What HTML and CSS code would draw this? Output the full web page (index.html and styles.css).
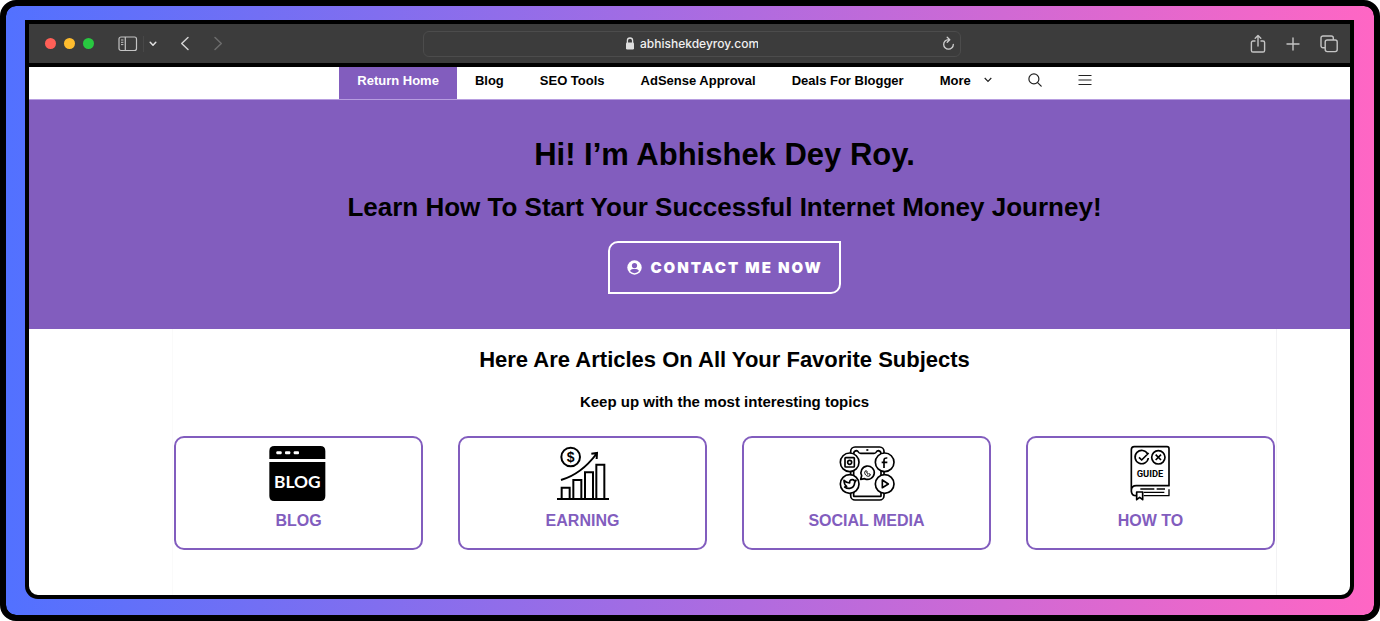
FILE: index.html
```html
<!DOCTYPE html>
<html lang="en">
<head>
    <meta charset="UTF-8">
    <meta name="viewport" content="width=device-width, initial-scale=1.0">
    <title>Abhishek Dey Roy</title>
    <link rel="stylesheet" href="styles.css">
</head>
<body>

<div class="frame">
    <div class="window">

        <!-- Browser bar -->
        <div class="toolbar">
            <div class="toolbar-left">
                <div class="lights">
                    <span class="light red"></span>
                    <span class="light yellow"></span>
                    <span class="light green"></span>
                </div>
                <button class="tool sidebar-btn" aria-label="Sidebar">
                    <svg width="20" height="16" viewBox="0 0 20 16" fill="none" stroke="#c4c4c4" stroke-width="1.2">
                        <rect x="1" y="1" width="17.5" height="13.5" rx="2"/>
                        <path d="M7.3 1v13.5"/>
                        <path d="M3 4h2.4M3 6.3h2.4M3 8.6h2.4" stroke-width="1"/>
                    </svg>
                </button>
                <button class="tool more-btn" aria-label="Tab groups">
                    <svg width="8" height="6" viewBox="0 0 8 6" fill="none" stroke="#e0e0e0" stroke-width="1.5" stroke-linecap="round" stroke-linejoin="round"><path d="M1.2 1.2 4 4.2l2.8-3"/></svg>
                </button>
                <button class="tool back-btn" aria-label="Back">
                    <svg width="10" height="15" viewBox="0 0 10 15" fill="none" stroke="#d2d2d2" stroke-width="1.5" stroke-linecap="round" stroke-linejoin="round"><path d="M8 1.5 1.7 7.5 8 13.5"/></svg>
                </button>
                <button class="tool" aria-label="Forward">
                    <svg width="10" height="15" viewBox="0 0 10 15" fill="none" stroke="#6c6c6c" stroke-width="1.5" stroke-linecap="round" stroke-linejoin="round"><path d="M2 1.5 8.3 7.5 2 13.5"/></svg>
                </button>
            </div>

            <div class="address">
                <div class="address-text">
                    <svg width="10" height="13" viewBox="0 0 10 13"><path d="M2.4 6V3.6a2.6 2.6 0 0 1 5.2 0V6" fill="none" stroke="#dedede" stroke-width="1.3"/><rect x="1" y="5.5" width="8" height="7" rx="1.2" fill="#dedede"/></svg>
                    <input class="url" type="text" value="abhishekdeyroy.com" aria-label="Address">
                </div>
                <button class="tool" aria-label="Reload">
                    <svg width="13" height="15" viewBox="0 0 13 15" fill="none" stroke="#d0d0d0" stroke-width="1.3" stroke-linecap="round" stroke-linejoin="round"><path d="M6.500 3.600a4.800 4.800 0 1 0 4.800 4.800M5.200 1.200l2.600 2.500-2.600 2.500"/></svg>
                </button>
            </div>

            <div class="toolbar-right">
                <button class="tool" aria-label="Share">
                    <svg width="16" height="20" viewBox="0 0 16 20" fill="none" stroke="#c4c4c4" stroke-width="1.4" stroke-linecap="round" stroke-linejoin="round"><path d="M5 7H3a1.6 1.6 0 0 0-1.6 1.6v7.8A1.6 1.6 0 0 0 3 18h10a1.6 1.6 0 0 0 1.6-1.6V8.6A1.6 1.6 0 0 0 13 7h-2M8 12V1.6M5.2 4.3 8 1.5l2.8 2.8"/></svg>
                </button>
                <button class="tool" aria-label="New tab">
                    <svg width="14" height="14" viewBox="0 0 14 14" fill="none" stroke="#c4c4c4" stroke-width="1.4" stroke-linecap="round"><path d="M7 1v12M1 7h12"/></svg>
                </button>
                <button class="tool" aria-label="Tab overview">
                    <svg width="18" height="18" viewBox="0 0 18 18" fill="none" stroke="#c4c4c4" stroke-width="1.4" stroke-linejoin="round"><rect x="5.2" y="5" width="12" height="11.6" rx="2"/><path d="M5 12.8H3a2 2 0 0 1-2-2V3a2 2 0 0 1 2-2h8.3a2 2 0 0 1 2 2v2"/></svg>
                </button>
            </div>
        </div>

        <!-- Site menu -->
        <nav class="nav">
            <a class="nav-link active" href="#">Return Home</a>
            <a class="nav-link" href="#">Blog</a>
            <a class="nav-link" href="#">SEO Tools</a>
            <a class="nav-link" href="#">AdSense Approval</a>
            <a class="nav-link" href="#">Deals For Blogger</a>
            <a class="nav-link" href="#">More
                <svg width="8" height="6" viewBox="0 0 8 6" fill="none" stroke="#222" stroke-width="1.2"><path d="M.7 1 4 4.4 7.3 1"/></svg>
            </a>
            <button class="nav-icon" aria-label="Search">
                <svg width="14" height="14" viewBox="0 0 14 14" fill="none" stroke="#222" stroke-width="1.2" stroke-linecap="round"><circle cx="5.9" cy="5.9" r="5"/><path d="m9.6 9.6 3.6 3.6"/></svg>
            </button>
            <button class="nav-icon" aria-label="Menu">
                <svg width="14" height="12" viewBox="0 0 14 12" stroke="#222" stroke-width="1.2"><path d="M.5 1.500h13M.5 6h13M.5 10.500h13"/></svg>
            </button>
        </nav>

        <header class="hero">
            <h1>Hi! I’m Abhishek Dey Roy.</h1>
            <h2>Learn How To Start Your Successful Internet Money Journey!</h2>
            <a class="contact" href="#">
                <svg width="15" height="15" viewBox="0 0 15 15"><circle cx="7.5" cy="7.5" r="7.2" fill="#fff"/><circle cx="7.5" cy="5.6" r="2.6" fill="#825dbe"/><path d="M3 11c.7-1.6 2.5-1.9 4.5-1.9s3.8.3 4.5 1.9a5.800 5.800 0 0 1-9 0z" fill="#825dbe"/></svg>
                Contact Me Now
            </a>
        </header>

        <main class="content">
            <h2>Here Are Articles On All Your Favorite Subjects</h2>
            <p>Keep up with the most interesting topics</p>

            <div class="cards">
                <a class="card" href="#">
                    <svg class="card-icon" viewBox="332 60 168 168">
                        <path d="M327 102V78q0-15 15-15h138q15 0 15 15v24z"/>
                        <path d="M327 111h168v102q0 15-15 15H342q-15 0-15-15z"/>
                        <g fill="#fff"><rect x="348" y="79" width="16" height="9" rx="3"/><rect x="374" y="79" width="16" height="9" rx="3"/><rect x="400" y="79" width="16" height="9" rx="3"/></g>
                        <text class="blog-text" x="411" y="189" text-anchor="middle">BLOG</text>
                    </svg>
                    <span>BLOG</span>
                </a>

                <a class="card" href="#">
                    <svg class="card-icon" viewBox="104 30 168 168" fill="none" stroke="#000" stroke-width="6">
                        <circle cx="151" cy="66" r="28"/>
                        <text class="dollar-text" x="151" y="80" text-anchor="middle">$</text>
                        <path d="M122 135c45-13 76-38 106-78M213 56l17-2-1 18"/>
                        <path d="M110 192h156M124 192v-34h24v34M159 192v-57h24v57M194 192v-80h24v80M228 192V89h24v103"/>
                    </svg>
                    <span>EARNING</span>
                </a>

                <a class="card" href="#">
                    <svg class="card-icon" viewBox="117 30 168 168" fill="none" stroke="#000" stroke-width="5" stroke-linejoin="round">
                        <rect x="152" y="36" width="100" height="159" rx="13"/>
                        <path d="M161 184V57q0-9 8-10 4 0 6 4t7 4h40q5 0 7-4t6-4q8 1 8 10v127z"/>
                        <path d="M199 45h6"/>
                        <g fill="#fff">
                            <circle cx="149" cy="82" r="28"/>
                            <circle cx="254" cy="82" r="28"/>
                            <circle cx="149" cy="147" r="28"/>
                            <circle cx="254" cy="147" r="28"/>
                            <path d="m182 133 3-11a20 20 0 1 1 9 9z"/>
                        </g>
                        <rect x="135" y="68" width="28" height="28" rx="2"/>
                        <circle cx="149" cy="82" r="6"/>
                        <path d="M252 99V76q0-8 10-7M245 82h17"/>
                        <path d="M247 135v23l18-11z"/>
                        <path d="M132 136q8 8 17 8-1-10 8-10 4 0 6 3l5-1-4 7q-1 15-15 17-8 1-15-4l6-2q-8-5-8-18z"/>
                        <path d="M194 112c0 8 8 14 15 11l2-5-5-2-2 2-4-4 2-3-3-4q-5 1-5 5z" stroke-width="3"/>
                    </svg>
                    <span>SOCIAL MEDIA</span>
                </a>

                <a class="card" href="#">
                    <svg class="card-icon" viewBox="69 30 168 168" fill="none" stroke="#000" stroke-width="5" stroke-linejoin="round">
                        <path d="M94 170V44q0-9 9-9h98q6 0 6 6v111h-98q-15 0-15 15 0 15 15 15h-1"/>
                        <path d="M131 182h76v-19M121 162h42M170 162h25M131 172h62" stroke-width="4"/>
                        <path d="M110 171v23l9-7 9 7v-23z" fill="#fff"/>
                        <path d="M143 57a20 20 0 1 0 2 12M117 67l8 8 21-21"/>
                        <circle cx="175" cy="67" r="20"/>
                        <path d="m167 59 16 16m0-16-16 16"/>
                        <text class="guide-text" x="150" y="125" text-anchor="middle">GUIDE</text>
                    </svg>
                    <span>HOW TO</span>
                </a>
            </div>
        </main>

    </div>
</div>

</body>
</html>
```
FILE: styles.css
```css
* {
    box-sizing: border-box;
}

body {
    margin: 0;
    background: #fff;
    color: #000;
    font-family: "Liberation Sans", Arial, sans-serif;
}

h1, h2, p {
    margin: 0;
}

a {
    color: inherit;
    text-decoration: none;
}

button {
    padding: 0;
    border: none;
    background: none;
    cursor: pointer;
}

svg {
    display: block;
    flex: none;
}

/* Gradient frame */
.frame {
    display: flex;
    min-height: 100vh;
    padding: 14px 20px 16px 19px;
    border: 6px solid #000;
    border-radius: 16px;
    background: linear-gradient(90deg, #5271ff, #ff66c4) padding-box, #000;
}

.window {
    flex: 1;
    min-width: 0;
    border: 4px solid #000;
    border-radius: 0 0 13px 13px;
    background: #fff;
    overflow: hidden;
}

/* Browser bar */
.toolbar {
    display: grid;
    grid-template-columns: 1fr minmax(0, 538px) 1fr;
    align-items: center;
    height: 43px;
    padding: 0 12px 0 16px;
    border-bottom: 4px solid #000;
    background: #3c3c3c;
}

.toolbar-left,
.toolbar-right,
.lights {
    display: flex;
    align-items: center;
}

.lights {
    gap: 8px;
}

.light {
    width: 11px;
    height: 11px;
    border-radius: 50%;
}

.red { background: #ff5f57; }
.yellow { background: #febc2e; }
.green { background: #28c840; }

.sidebar-btn {
    margin-left: 24px;
    padding-right: 5px;
    border-right: 1px solid #484848;
}

.more-btn {
    margin-left: 5px;
}

.back-btn {
    margin: 0 23px;
}

.address {
    display: flex;
    align-items: center;
    height: 26px;
    padding-right: 5px;
    border: 1px solid #4c4c4c;
    border-radius: 6px;
}

.address-text {
    display: flex;
    flex: 1;
    align-items: center;
    justify-content: center;
    gap: 5px;
    padding-left: 18px;
}

.url {
    width: 118px;
    padding: 0;
    border: none;
    background: none;
    color: #f0f0f0;
    font: 500 12px/16px Inter, sans-serif;
    field-sizing: content;
}

.toolbar-right {
    justify-content: flex-end;
    gap: 20px;
}

/* Site menu */
.nav {
    display: flex;
    justify-content: center;
    padding-left: 70px;
    border-bottom: 1px solid #b79de0;
}

.nav-link,
.nav-icon {
    display: flex;
    align-items: center;
    height: 32px;
    padding: 0 18px 6px;
}

.nav-link {
    gap: 13px;
    font-size: 13px;
    font-weight: bold;
    white-space: nowrap;
}

.active {
    background: #825dbe;
    color: #fff;
}

/* Purple banner */
.hero {
    display: flex;
    flex-direction: column;
    align-items: center;
    padding: 36px 0 35px 70px;
    background: #825dbe;
    text-align: center;
}

.hero h1 {
    font-size: 31px;
    line-height: 38px;
}

.hero h2 {
    margin: 17px 0 18px;
    font-size: 26px;
    line-height: 32px;
}

.contact {
    display: flex;
    align-items: center;
    gap: 8px;
    height: 53px;
    padding: 0 16px 0 17px;
    border: 2px solid #fff;
    border-radius: 10px 0;
    color: #fff;
    font: 900 15px/20px Inter, sans-serif;
    letter-spacing: 2px;
    text-transform: uppercase;
}

/* Topics */
.content {
    margin: 0 73px 0 143px;
    padding: 17px 1px 45px;
    border-right: 1px solid #f2f2f4;
    border-left: 1px solid #fafafa;
    text-align: center;
}

.content h2 {
    font-size: 22px;
    line-height: 28px;
}

.content p {
    margin: 18px 0 24px;
    font-size: 15px;
    font-weight: bold;
    line-height: 20px;
}

.cards {
    display: grid;
    grid-template-columns: repeat(4, 1fr);
    gap: 35px;
}

.card {
    display: flex;
    flex-direction: column;
    align-items: center;
    gap: 10px;
    padding: 7px 0 17px;
    border: 2px solid #825dbe;
    border-radius: 10px;
    color: #825dbe;
    font-size: 16px;
    font-weight: bold;
    line-height: 20px;
}

.card-icon {
    width: 56px;
    height: 56px;
    overflow: visible;
}

.blog-text {
    fill: #fff;
    font: bold 52px Lato, sans-serif;
}

.dollar-text {
    fill: #000;
    stroke: none;
    font: bold 42px "Liberation Sans", sans-serif;
}

.guide-text {
    fill: #000;
    stroke: none;
    font: bold 28px Roboto, sans-serif;
}
```
